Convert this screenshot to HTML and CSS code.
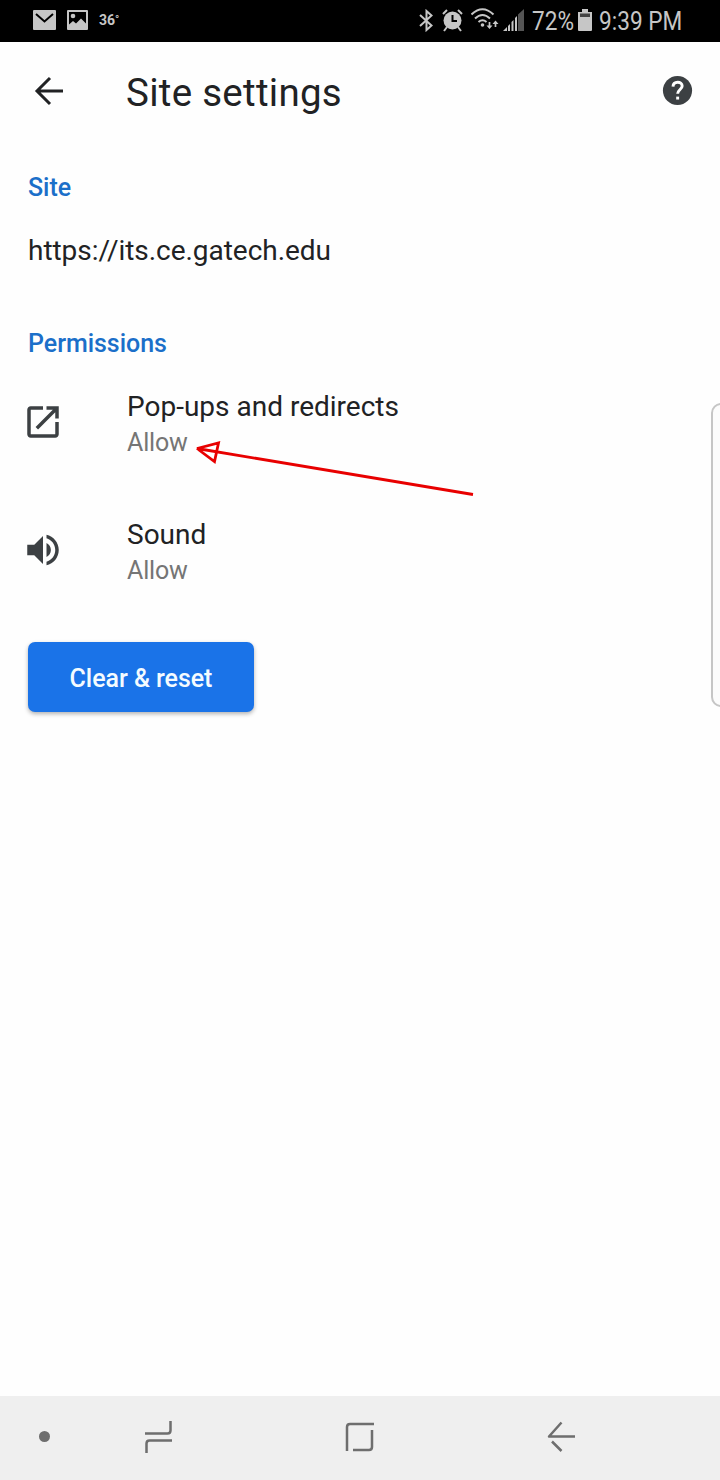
FILE: index.html
```html
<!DOCTYPE html>
<html lang="en">
<head>
<meta charset="utf-8">
<title>Site settings</title>
<link rel="stylesheet" href="styles.css">
</head>
<body>
<div class="screen">
  <header class="status">
    <svg class="mail" width="23" height="20" viewBox="0 0 23 20"><rect width="23" height="20" rx="1" fill="#c6c6c6"/><path d="M3 4l8.500 7.500L20 4" fill="none" stroke="#000" stroke-width="2"/></svg>
    <svg class="photo" width="21" height="20" viewBox="0 0 21 20"><path fill="#c6c6c6" fill-rule="evenodd" d="M1 0h19a1 1 0 0 1 1 1v18a1 1 0 0 1-1 1H1a1 1 0 0 1-1-1V1a1 1 0 0 1 1-1zM2 2v12.500l4-3.500 3 2.500 5-5 5 5V2z"/><circle cx="6" cy="6" r="2.300" fill="#c6c6c6"/></svg>
    <span class="temp">36<span class="degree">°</span></span>
    <span class="spacer"></span>
    <svg class="bluetooth" width="14" height="23" viewBox="0 0 14 23"><path d="M1 6l11.500 10.500-5 4.500V2l5 4.500L1 17" fill="none" stroke="#c6c6c6" stroke-width="2"/></svg>
    <svg class="alarm" width="21" height="23" viewBox="0 0 21 23"><circle cx="10.500" cy="11.500" r="9" fill="#c6c6c6"/><path d="M10.500 6v6H15" fill="none" stroke="#000" stroke-width="2"/><path d="M1 5l4-4M20 5l-4-4M5 18l-3 4M16 18l3 4" stroke="#c6c6c6" stroke-width="2"/></svg>
    <svg class="wifi" width="28" height="23" viewBox="0 0 28 23"><g fill="none" stroke="#c6c6c6" stroke-width="2"><path d="M.5 6.500q11-10.500 22 0M4 10.500q7.500-7 15 0M7.500 14q4-3.500 8 0"/></g><circle cx="11.500" cy="17" r="1.800" fill="#c6c6c6"/><path d="M18.500 14v5M24.500 19v-5" stroke="#c6c6c6" stroke-width="1.700"/><path d="M15.500 17.500h6l-3 3.500zM21.500 16h6l-3-3.500z" fill="#c6c6c6"/></svg>
    <svg class="signal" width="21" height="22" viewBox="0 0 21 22"><path fill="#555" d="M15 5.500L21 0v22h-6z"/><path fill="#c6c6c6" d="M0 22l4-4v4zM5 17l2-2v7H5zM8.500 13l2-2v11h-2zM12 9l2-2v15h-2z"/></svg>
    <span class="percent"><span class="condensed">72%</span></span>
    <svg class="battery" width="14" height="22" viewBox="0 0 14 22"><path fill="#c6c6c6" d="M4 0h6v3h4v18a1 1 0 0 1-1 1H1a1 1 0 0 1-1-1V3h4z"/><path fill="#444" d="M2 4.500h10V8H2z"/></svg>
    <span class="clock"><span class="condensed">9:39 PM</span></span>
  </header>
  <div class="toolbar">
    <svg class="back" width="30" height="30" viewBox="0 0 30 30"><path d="M29 15H3M16 2L3 15l13 13" fill="none" stroke="#212224" stroke-width="3"/></svg>
    <h1 class="title">Site settings</h1>
    <svg class="help" width="35" height="35" viewBox="0 0 24 24"><circle cx="12" cy="12" r="10" fill="#3c4043"/><path d="M8.900 9.300c.2-4 6.300-3.900 6.300-.4 0 2.400-3.100 2.500-3.100 5.400" fill="none" stroke="#fff" stroke-width="2"/><path d="M11.100 16.200h2v2h-2z" fill="#fff"/></svg>
  </div>
  <main class="content">
    <h2 class="label">Site</h2>
    <p class="address">https://its.ce.gatech.edu</p>
    <h2 class="label permissions">Permissions</h2>
    <section class="row">
      <svg class="row-icon" width="42" height="42" viewBox="0 0 24 24"><path fill="#3c4043" d="M19 19H5V5h7V3H5c-1.110 0-2 .9-2 2v14c0 1.100.89 2 2 2h14c1.100 0 2-.9 2-2v-7h-2v7zM14 3v2h3.590l-9.830 9.830 1.410 1.410L19 6.410V10h2V3h-7z"/></svg>
      <div class="texts"><div class="name">Pop-ups and redirects</div><div class="value">Allow</div></div>
      <svg class="pointer" width="290" height="62" viewBox="190 438 290 62"><path d="M473 494.500L197 448.500l21.500-5.500-4 18.500-17.500-13" fill="none" stroke="#e80000" stroke-width="2.800"/></svg>
    </section>
    <section class="row">
      <svg class="row-icon" width="42" height="42" viewBox="0 0 24 24"><path fill="#3c4043" d="M3 9v6h4l5 5V4L7 9H3zm13.500 3c0-1.770-1.020-3.290-2.500-4.030v8.050c1.480-.73 2.500-2.250 2.500-4.020zM14 3.230v2.060c2.890.86 5 3.540 5 6.710s-2.110 5.850-5 6.710v2.060c4.010-.91 7-4.490 7-8.770s-2.990-7.860-7-8.770z"/></svg>
      <div class="texts"><div class="name">Sound</div><div class="value">Allow</div></div>
    </section>
    <button class="reset">Clear &amp; reset</button>
  </main>
  <div class="edge"></div>
  <nav class="navbar">
    <span class="dot"></span>
    <svg class="recents" width="28" height="32" viewBox="0 0 28 32"><path d="M0 12.500h22.500q3 0 3-3V0M27 19.500H4.500q-3 0-3 3V32" fill="none" stroke="#6e6e6e" stroke-width="2.500"/></svg>
    <svg class="home" width="30" height="30" viewBox="0 0 30 30"><path d="M29 2H5Q2 2 2 5v24M8 28h16q3 0 3-3V8" fill="none" stroke="#6e6e6e" stroke-width="2.500"/></svg>
    <svg class="nav-back" width="28" height="32" viewBox="0 0 28 32"><path d="M28 16.500H2L14.500 2.500M5 21.500l9.500 9.500" fill="none" stroke="#6e6e6e" stroke-width="2.500" stroke-linejoin="round"/></svg>
  </nav>
</div>
</body>
</html>
```
FILE: styles.css
```css
* { box-sizing: border-box; margin: 0; padding: 0; }
body { font-family: Roboto, sans-serif; background: #fefefe; color: #212224; }
svg { display: block; flex: none; }
.screen { position: relative; width: 720px; height: 1480px; display: flex; flex-direction: column; overflow: hidden; }
.status { height: 42px; background: #000; color: #c6c6c6; display: flex; align-items: flex-start; padding: 0 33px 0 33px; }
.mail { margin-top: 10px; }
.photo { margin: 10px 0 0 11px; }
.temp { font-size: 14px; line-height: 20px; font-weight: 700; margin: 10px 0 0 11px; }
.degree { font-size: 11px; vertical-align: 2px; }
.spacer { flex: 1; }
.bluetooth { margin: 9px 9px 0 0; }
.alarm { margin: 9px 8px 0 0; }
.wifi { margin: 8px 4px 0 0; }
.signal { margin: 9px 6px 0 0; }
.percent, .clock { font-size: 26px; line-height: 30px; white-space: nowrap; margin-top: 6px; flex: none; }
.percent { width: 46px; padding-left: 2px; margin-right: 2px; }
.clock { width: 90px; padding-left: 2px; }
.condensed { display: inline-block; transform: scaleX(.87); transform-origin: left; }
.battery { margin: 9px 5px 0 0; }
.toolbar { height: 100px; display: flex; align-items: center; padding: 0 25px 2px 34px; }
.title { font-size: 38.500px; line-height: 46px; font-weight: 400; letter-spacing: .28px; margin: 4px 0 0 62px; flex: 1; }
.help { margin-bottom: 1px; }
.content { flex: 1; padding: 31px 28px; }
.label { color: #1b6fc9; font-size: 25px; line-height: 30px; font-weight: 500; letter-spacing: -.03px; }
.address { font-size: 28px; line-height: 34px; letter-spacing: -.04px; margin: 31px 0 61px; }
.row { position: relative; display: flex; height: 128px; align-items: flex-start; }
.content .permissions { margin-bottom: 31px; }
.row-icon { margin: 11px 58px 0 -6px; }
.texts { margin-left: 5px; }
.name { font-size: 28px; line-height: 34px; }
.value { font-size: 25px; line-height: 34px; margin-top: 2px; letter-spacing: -.15px; color: #757575; }
.pointer { position: absolute; left: 162px; top: 48px; }
.reset { display: block; width: 226px; height: 70px; margin-top: -4px; border: 0; border-radius: 7px; background: #1a73e8; color: #f4fbff; font: 500 25px/70px Roboto, sans-serif; letter-spacing: -.05px; padding-top: 2px; box-shadow: 0 2px 4px rgba(0,0,0,.3); }
.edge { position: absolute; left: 711px; top: 403px; width: 20px; height: 304px; border: 2px solid #c6c6c6; border-radius: 12px; background: #fcfcfc; }
.navbar { height: 84px; background: #efefef; display: flex; align-items: center; padding: 0 145px 4px 39px; }
.dot { width: 11px; height: 11px; border-radius: 50%; background: #6e6e6e; }
.recents { margin: 1px 0 0 95px; }
.home { margin: 1px 0 0 171.500px; }
.nav-back { margin-left: 172.500px; }
```
